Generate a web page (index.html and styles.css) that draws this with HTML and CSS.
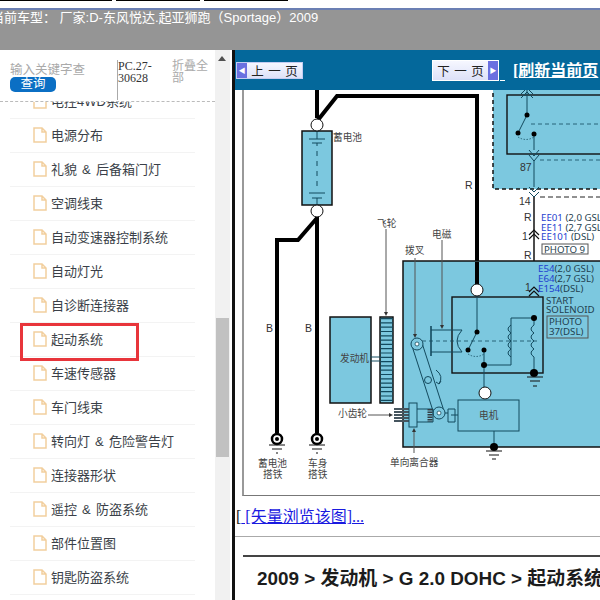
FILE: index.html
```html
<!DOCTYPE html>
<html lang="zh">
<head>
<meta charset="utf-8">
<title>起动系统</title>
<link rel="stylesheet" href="styles.css">
</head>
<body>
<header class="top">
  <div class="strip"><span class="tab t1"></span><span class="tab t2"></span><span class="tab t3"></span></div>
  <div class="car">当前车型： 厂家:D-东风悦达.起亚狮跑（Sportage）2009</div>
</header>
<div class="main">
  <aside class="side">
    <div class="tree">
      <div class="search">
        <div class="query">
          <div class="kw">输入关键字查</div>
          <div class="btn">查询</div>
        </div>
        <div class="code">PC.27-30628</div>
        <div class="fold">折叠全部</div>
      </div>
      <div class="list">
        <ul class="items">
          <li><svg class="doc" viewBox="0 0 14 16"><path d="M1 1h8l4 4v10H1z M9 1v4h4"/></svg>电控4WD系统</li>
          <li><svg class="doc" viewBox="0 0 14 16"><path d="M1 1h8l4 4v10H1z M9 1v4h4"/></svg>电源分布</li>
          <li><svg class="doc" viewBox="0 0 14 16"><path d="M1 1h8l4 4v10H1z M9 1v4h4"/></svg>礼貌 &amp; 后备箱门灯</li>
          <li><svg class="doc" viewBox="0 0 14 16"><path d="M1 1h8l4 4v10H1z M9 1v4h4"/></svg>空调线束</li>
          <li><svg class="doc" viewBox="0 0 14 16"><path d="M1 1h8l4 4v10H1z M9 1v4h4"/></svg>自动变速器控制系统</li>
          <li><svg class="doc" viewBox="0 0 14 16"><path d="M1 1h8l4 4v10H1z M9 1v4h4"/></svg>自动灯光</li>
          <li><svg class="doc" viewBox="0 0 14 16"><path d="M1 1h8l4 4v10H1z M9 1v4h4"/></svg>自诊断连接器</li>
          <li class="picked"><svg class="doc" viewBox="0 0 14 16"><path d="M1 1h8l4 4v10H1z M9 1v4h4"/></svg>起动系统</li>
          <li><svg class="doc" viewBox="0 0 14 16"><path d="M1 1h8l4 4v10H1z M9 1v4h4"/></svg>车速传感器</li>
          <li><svg class="doc" viewBox="0 0 14 16"><path d="M1 1h8l4 4v10H1z M9 1v4h4"/></svg>车门线束</li>
          <li><svg class="doc" viewBox="0 0 14 16"><path d="M1 1h8l4 4v10H1z M9 1v4h4"/></svg>转向灯 &amp; 危险警告灯</li>
          <li><svg class="doc" viewBox="0 0 14 16"><path d="M1 1h8l4 4v10H1z M9 1v4h4"/></svg>连接器形状</li>
          <li><svg class="doc" viewBox="0 0 14 16"><path d="M1 1h8l4 4v10H1z M9 1v4h4"/></svg>遥控 &amp; 防盗系统</li>
          <li><svg class="doc" viewBox="0 0 14 16"><path d="M1 1h8l4 4v10H1z M9 1v4h4"/></svg>部件位置图</li>
          <li><svg class="doc" viewBox="0 0 14 16"><path d="M1 1h8l4 4v10H1z M9 1v4h4"/></svg>钥匙防盗系统</li>
        </ul>
      </div>
    </div>
    <div class="scroll">
      <div class="arrow"></div>
      <div class="thumb"></div>
    </div>
  </aside>
  <section class="content">
    <nav class="nav">
      <div class="pager prev"><span class="cap">◀</span><span class="lbl">上 一 页</span></div>
      <div class="pager next"><span class="lbl">下 一 页</span><span class="cap">▶</span></div>
      <a class="stub">&nbsp;</a>
      <a class="refresh">[刷新当前页</a>
    </nav>
    <div class="figure">
      <svg class="diagram" viewBox="235 90 365 406" width="365" height="406">
        <!-- upper fuse box -->
        <rect class="blue dash" x="493" y="80" width="120" height="109"/>
        <rect class="box" x="507" y="95" width="100" height="59"/>
        <path class="th" d="M527 90v25M527 115l-9 18M534 134v16M534 160v27"/>
        <path class="dline" d="M531 124h70M540 160h60"/>
        <path class="dlinek" d="M540 197h60"/>
        <path class="dots" d="M518 137q8 5 16 0"/>
        <circle class="dot" cx="527" cy="115" r="2.5"/><circle class="dot" cx="518" cy="133" r="2.5"/><circle class="dot" cx="534" cy="134" r="2.5"/>
        <path class="th" d="M521 94l6-6 6 6M521 98l6-6 6 6"/>
        <path class="th" d="M529 150l5 6 5-6M529 155l5 6 5-6"/>
        <path class="th" d="M529 187l5 5 5-5M529 192l5 5 5-5"/>
        <path class="wirethin" d="M534 197V292"/>
        <path class="th2" d="M529 235l5-5 5 5M529 239l5-5 5 5"/>
        <!-- thick wires -->
        <path class="wire" d="M317 90v28M318 120l19-24H477V284"/>
        <path class="wire" d="M317 216v217M317 218l-19 22h-21V433"/>
        <!-- battery -->
        <rect class="blue edge" x="302" y="131" width="30" height="74"/>
        <path class="th" d="M309 139h16M312 143h10M317 131v8M317 143v3M317 151v5M317 161v5M317 171v5M317 181v5M309 193h16M312 198h10M317 198v7"/>
        <circle class="port" cx="317" cy="125" r="6"/><circle class="port" cx="317" cy="211" r="6"/>
        <!-- engine & flywheel -->
        <rect class="blue edge" x="330" y="317" width="41" height="86"/>
        <rect class="blue edge" x="380" y="317" width="13" height="86"/>
        <path class="teeth" d="M386.500 318V403"/>
        <path class="th" d="M371 357h9M371 361h9"/>
        <path class="grey" d="M386 229V312"/><path class="arr" d="M384 312h4l-2 4z"/>
        <!-- solenoid housing -->
        <rect class="blue edge" x="403" y="261" width="210" height="186"/>
        <rect class="box2" x="452" y="297" width="91" height="76"/>
        <path class="wire" d="M477 262V284"/>
        <path class="th" d="M477 296V332M477 332l-9 18M484 350v38"/>
        <path class="th" d="M484 365h27v-47h23"/>
        <path class="th" d="M511 325q-6 4 0 8q-6 4 0 8q-6 4 0 8q-6 4 0 8"/>
        <path class="th" d="M534 318v7q-6 4 0 8q-6 4 0 8q-6 4 0 8q-6 4 0 8v16"/>
        <path class="dline" d="M422 341h115"/>
        <path class="dots" d="M468 354q8 5 16 0"/>
        <path class="plunger" d="M431 326v30"/>
        <path class="th" d="M431 330h31M431 352h31M462 330q-10 11 0 22"/>
        <circle class="dot" cx="477" cy="332" r="2.5"/><circle class="dot" cx="468" cy="350" r="2.5"/><circle class="dot" cx="484" cy="350" r="2.5"/>
        <circle class="dot" cx="484" cy="365" r="3"/><circle class="dot" cx="534" cy="318" r="3"/><circle class="dot" cx="534" cy="373" r="4"/>
        <path class="th2" d="M527 377h16M530 381h10M533 386h4"/>
        <circle class="port" cx="477" cy="290" r="6"/>
        <circle class="port" cx="485" cy="393" r="6"/>
        <rect class="blue edge1" x="458" y="400" width="61" height="31"/>
        <path class="th" d="M494 431v13"/>
        <circle class="dot" cx="494" cy="447" r="4"/>
        <path class="th2" d="M486 451h16M489 455h10M492 459h4"/>
        <path class="th2" d="M529 292l5-5 5 5M529 296l5-5 5 5" />
        <!-- lever -->
        <path class="th" d="M412 346l22 68M422 343l22 68"/>
        <circle class="blue edge1" cx="417" cy="344" r="6"/><circle class="ring" cx="417" cy="344" r="2"/>
        <circle class="blue edge1" cx="428" cy="380" r="3.500"/>
        <circle class="blue edge1" cx="439" cy="413" r="6"/><circle class="ring" cx="439" cy="413" r="2"/>
        <path class="th" d="M436 370q8 6 3 14l-3 -2M439 384l2 -3"/>
        <path class="th" d="M445 413h3M448 409h7v13h-7zM451 415h7"/>
        <!-- pinion/clutch -->
        <path class="gearbar" d="M402 408V422"/>
        <rect class="blue edge1" x="409" y="403" width="8" height="24"/>
        <path class="th" d="M417 409h16v13h-16"/>
        <path class="clutch" d="M430 409V422"/>
        <path class="grey" d="M368 415h22"/><path class="arr" d="M389 413v4l4-2z"/>
        <path class="grey" d="M414 453V432"/><path class="arr" d="M412 432h4l-2-4z"/>
        <path class="grey" d="M415 258V334"/><path class="arr" d="M413 334h4l-2 4z"/>
        <path class="grey" d="M442 240V325"/><path class="arr" d="M440 325h4l-2 4z"/>
        <!-- grounds -->
        <circle class="gnd" cx="277" cy="439" r="5"/><circle class="dot" cx="277" cy="439" r="2"/>
        <circle class="gnd" cx="317" cy="439" r="5"/><circle class="dot" cx="317" cy="439" r="2"/>
        <path class="th2" d="M269 445h16M272 449h10M276 453h2M309 445h16M312 449h10M316 453h2"/>
        <text x="333" y="141" class="t">蓄电池</text>
        <text x="377" y="227" class="t">飞轮</text>
        <text x="405" y="254" class="t">拨叉</text>
        <text x="432" y="238" class="t">电磁</text>
        <text x="340" y="362" class="t">发动机</text>
        <text x="338" y="417" class="t">小齿轮</text>
        <text x="390" y="466" class="t">单向离合器</text>
        <text x="258" y="467" class="t">蓄电池</text>
        <text x="263" y="478" class="t">搭铁</text>
        <text x="308" y="467" class="t">车身</text>
        <text x="308" y="478" class="t">搭铁</text>
        <text x="479" y="419" class="t">电机</text>
        <text x="266" y="332" class="l">B</text><text x="305" y="332" class="l">B</text>
        <text x="465" y="189" class="l">R</text><text x="524" y="221" class="l">R</text><text x="524" y="259" class="l">R</text>
        <text x="520" y="171" class="l">87</text><text x="519" y="205" class="l">14</text><text x="522" y="240" class="l">1</text><text x="525" y="291" class="l">1</text>
        <text x="541" y="221" class="s"><tspan class="code-blue">EE01</tspan> (2,0 GSL)</text>
        <text x="541" y="231" class="s"><tspan class="code-blue">EE11</tspan> (2,7 GSL)</text>
        <text x="541" y="240" class="s"><tspan class="code-blue">EE101</tspan> (DSL)</text>
        <rect class="tag" x="542" y="244" width="46" height="10"/><text x="544" y="252.500" class="s">PHOTO 9</text>
        <text x="538" y="272" class="s"><tspan class="code-blue">E54</tspan>(2,0 GSL)</text>
        <text x="538" y="282" class="s"><tspan class="code-blue">E64</tspan>(2,7 GSL)</text>
        <text x="538" y="292" class="s"><tspan class="code-blue">E154</tspan>(DSL)</text>
        <text x="546" y="303.500" class="s">START</text><text x="546" y="313" class="s">SOLENOID</text>
        <rect class="tag" x="547" y="316" width="41" height="22"/><text x="549" y="325" class="s">PHOTO</text><text x="549" y="335" class="s">37(DSL)</text>
      </svg>
    </div>
    <div class="vector"><span>[</span><a>&nbsp;[矢量浏览该图]...</a></div>
    <hr class="sep">
    <div class="crumb">
      <h1>2009 &gt; 发动机 &gt; G 2.0 DOHC &gt; 起动系统</h1>
    </div>
  </section>
</div>
</body>
</html>
```
FILE: styles.css
```css
* , *::after { box-sizing: border-box; }
html, body { margin: 0; padding: 0; }
body { width: 600px; height: 600px; overflow: hidden; background: #fff; font-family: "Liberation Sans", "Noto Sans CJK SC", sans-serif; }

.top { height: 50px; background: #959595; overflow: hidden; }
.strip { height: 8px; background: #fff; display: flex; gap: 4px; align-items: flex-start; }
.tab { height: 1px; background: #000; display: block; }
.t1 { width: 112px; }
.t2 { width: 84px; }
.t3 { width: 84px; }
.car { height: 42px; border-top: 2px solid #6b7fb3; color: #fff; font-size: 13px; line-height: 15px; white-space: nowrap; text-indent: -9px; }

.main { display: flex; height: 550px; }
.side { width: 232px; display: flex; flex: none; }
.tree { width: 215px; display: flex; flex-direction: column; }
.search { height: 52px; display: flex; border-bottom: 1px dashed #bbb; flex: none; background: #fff; position: relative; z-index: 1; }
.query { width: 117px; padding: 13px 0 0 10px; }
.kw { font-size: 12.500px; line-height: 14px; color: #aaa; width: 75px; overflow: hidden; white-space: nowrap; }
.btn { width: 46px; height: 15px; background: #0b6fc4; color: #fff; border-radius: 5px; font-size: 12.500px; line-height: 15px; text-align: center; }
.code { width: 55px; height: 40px; margin-top: 10px; font-family: "Liberation Serif", serif; font-size: 12px; line-height: 12px; color: #333; border-left: 1px solid #aaa; }
.fold { width: 40px; margin-top: 10px; font-size: 12px; line-height: 12px; color: #aaa; }

.list { flex: 1; overflow: hidden; }
.items { list-style: none; margin: -17px 0 0; padding: 0 0 0 10px; width: 195px; }
.items li { height: 34px; display: flex; align-items: center; border-bottom: 1px solid #f3f3f3; font-size: 13px; word-spacing: 1.500px; color: #3a3f48; white-space: nowrap; padding: 0 0 2px 41px; position: relative; }
.doc { width: 14px; height: 16px; fill: #fff; stroke: #f2cf9e; stroke-width: 1.500; position: absolute; left: 23px; top: 8px; }
.items .picked::after { content: ""; position: absolute; left: 10px; top: 0; width: 119px; height: 38px; border: 3px solid #e8353b; }

.scroll { width: 15px; background: #f1f1f1; position: relative; flex: none; }
.arrow { position: absolute; left: 3px; top: 6px; border: 4px solid transparent; border-top: 0; border-bottom: 5px solid #505050; }
.thumb { position: absolute; left: 1px; top: 268px; width: 13px; height: 139px; background: #c1c1c1; }

.content { width: 368px; flex: none; border-left: 3px solid #111; }
.nav { height: 40px; background: #04689b; display: flex; align-items: flex-start; }
.pager { display: flex; align-items: center; background: linear-gradient(#f6f7ff, #dde1f8); border: 1px solid #c4ccf2; font-size: 12.500px; color: #222; }
.prev { width: 67px; height: 17px; margin: 12px 0 0 1px; }
.next { width: 67px; height: 21px; margin: 10px 0 0 129px; border-color: #fff; }
.cap { width: 10px; height: 100%; background: #6a70e0; color: #fff; font-size: 7px; line-height: 16px; text-align: center; flex: none; }
.next .cap { line-height: 19px; }
.lbl { flex: 1; text-align: center; white-space: nowrap; word-spacing: 1px; }
.stub { width: 5px; height: 20px; margin: 11px 0 0 1px; border-bottom: 1px solid #fff; font-size: 12px; line-height: 16px; overflow: hidden; flex: none; }
.refresh { margin: 10px 0 0 8px; color: #fff; font-family: "Liberation Serif", "Noto Sans CJK SC", serif; font-weight: bold; font-size: 16px; line-height: 21px; text-decoration: underline; white-space: nowrap; }

.figure { height: 406px; border-left: 2px solid #999; border-bottom: 1px solid #777; margin-left: 7px; overflow: hidden; }
.diagram { display: block; margin-left: -9px; }
.vector { height: 40px; padding-top: 12px; font-family: "Liberation Serif", "Noto Sans CJK SC", serif; font-size: 16px; line-height: 18px; color: #222; margin-left: 1px; white-space: nowrap; }
.vector a { color: #1a1ae0; text-decoration: underline; }
.sep { margin: 0; border: 0; border-top: 1px solid #aaa; }
.crumb { margin-left: 8px; margin-top: 18px; border-top: 2px solid #444; padding-top: 11px; overflow: hidden; }
.crumb h1 { margin: 0 0 0 14px; font-size: 18.900px; line-height: 22px; font-weight: bold; color: #1c1c1c; white-space: nowrap; }

.blue { fill: #7cc8df; }
.dash { stroke: #111; stroke-width: 1.500; stroke-dasharray: 4 3; }
.edge { stroke: #111; stroke-width: 1.500; }
.edge1 { stroke: #134a5e; stroke-width: 1; }
.box { fill: none; stroke: #111; stroke-width: 1.400; }
.box2 { fill: none; stroke: #111; stroke-width: 1.400; }
.th { fill: none; stroke: #134a5e; stroke-width: 1; }
.th2 { fill: none; stroke: #111; stroke-width: 1.200; }
.dline { fill: none; stroke: #134a5e; stroke-width: .8; stroke-dasharray: 4 3; }
.dlinek { fill: none; stroke: #222; stroke-width: 1; stroke-dasharray: 5 3; }
.dots { fill: none; stroke: #134a5e; stroke-width: .8; stroke-dasharray: 1.500 1.500; }
.wire { fill: none; stroke: #000; stroke-width: 4; }
.wirethin { fill: none; stroke: #111; stroke-width: 1.500; }
.plunger { fill: none; stroke: #134a5e; stroke-width: 1.600; }
.dot { fill: #000; }
.port { fill: #fff; stroke: #111; stroke-width: 1; }
.ring { fill: #fff; stroke: #134a5e; stroke-width: .8; }
.gnd { fill: #fff; stroke: #000; stroke-width: 2.500; }
.teeth { stroke: #134a5e; stroke-width: 13; stroke-dasharray: 1.200 3.100; fill: none; }
.gearbar { stroke: #46555e; stroke-width: 16; stroke-dasharray: 2 1; fill: none; }
.clutch { stroke: #333d44; stroke-width: 5; stroke-dasharray: 1.500 1; fill: none; }
.grey { stroke: #555; stroke-width: 1; fill: none; }
.arr { fill: #333; }
.tag { fill: none; stroke: #555; stroke-width: 1; }
.t { font-family: "Noto Sans CJK SC", sans-serif; font-size: 9.700px; fill: #444; }
.l { font-family: "Liberation Sans", sans-serif; font-size: 10.500px; fill: #333; }
.s { font-family: "Noto Sans", sans-serif; font-size: 9.700px; fill: #1f3f4f; }
.code-blue { fill: #1f3fd0; }
```
